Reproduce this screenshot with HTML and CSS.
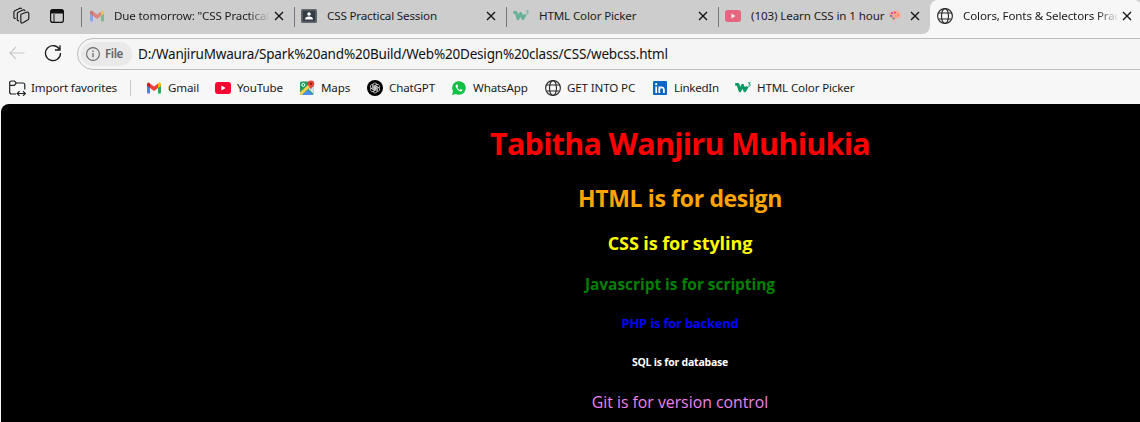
FILE: index.html
```html
<!DOCTYPE html>
<html lang="en">
<head>
<meta charset="utf-8">
<title>Colors, Fonts &amp; Selectors Practice</title>
<link rel="stylesheet" href="styles.css">
</head>
<body>
<svg class="defs" width="0" height="0">
  <symbol id="gmail" viewBox="0 0 16 16"><path fill="#4285f4" d="M1 4v8.500a1 1 0 0 0 1 1h2V7z"/><path fill="#34a853" d="M15 4v8.500a1 1 0 0 1-1 1h-2V7z"/><path fill="#c5221f" d="M1 4.200Q1 2.400 2.500 2.500L4 3.400V8L1 5.800z"/><path fill="#ea4335" d="M4 3.400l4 3 4-3V8l-4 3-4-3z"/><path fill="#fbbc04" d="M15 4.200q0-1.800-1.500-1.700L12 3.400V8l3-2.200z"/></symbol>
  <symbol id="youtube" viewBox="0 0 16 16"><rect y="2" width="16" height="12" rx="3" fill="#ff0033"/><path fill="#fff" d="M6.300 5.500l4.400 2.500-4.400 2.500z"/></symbol>
  <symbol id="w3" viewBox="0 0 16 16"><path fill="none" stroke="#059862" stroke-width="2.800" stroke-linejoin="round" d="M.2 4.300h2.800L5 10.800l2.500-5.600 2.300 5.600L12.200 6.500"/><path fill="none" stroke="#059862" stroke-width=".9" d="M13 2.800h2.300L14 4.200q1.500 0 1.300 1.200t-2.300.7"/></symbol>
  <symbol id="globe" viewBox="0 0 16 16"><g fill="none" stroke="#2b2b2b" stroke-width="1.150"><circle cx="8" cy="8" r="7.400"/><ellipse cx="8" cy="8" rx="3.500" ry="7.400"/><path d="M1.500 5h13M1.500 11h13"/></g></symbol>
  <symbol id="close" viewBox="0 0 10 10"><path d="M1 1l8 8M9 1L1 9" stroke="#161616" stroke-width="1.400"/></symbol>
</svg>

<div class="tabbar">
  <div class="inactive">
    <div class="tools">
      <svg class="workspaces" viewBox="0 0 18 18"><g fill="none" stroke="#1a1a1a" stroke-width="1.150" stroke-linejoin="round"><path d="M9.500 7l5-1.800q2-.5 2.300 1.300v4.700q0 1-.8 1.600L11 15.800q-1.800.8-2.200-.8V8.500q0-1.200.7-1.500"/><path d="M7 13.800q-1.700.2-1.700-1.300V6.800q0-1 1-1.500l4.500-2.200q1.700-.6 2.200 1"/><path d="M3.800 11.500q-1.900.3-1.900-1.300V5.200q0-1 1-1.500l4.500-2.300q1.500-.7 2.300.5"/></g></svg>
      <svg class="tabmenu" viewBox="0 0 14 14"><rect x=".6" y=".6" width="12.800" height="12.800" rx="2.200" fill="none" stroke="#111" stroke-width="1.200"/><path d="M.5 4.500V2.500a2 2 0 0 1 2-2h9a2 2 0 0 1 2 2v2z" fill="#111"/><path d="M4 5v8.500" stroke="#111"/></svg>
    </div>
    <div class="tab first"><svg class="ico dim"><use href="#gmail"/></svg><span class="title fade">Due tomorrow: "CSS Practical</span><svg class="x"><use href="#close"/></svg></div>
    <div class="tab"><svg class="ico" viewBox="0 0 16 16"><rect y="1" width="16" height="14" rx="1.500" fill="#62676a"/><rect x="1.700" y="2.700" width="12.600" height="10.600" fill="#333b45"/><circle cx="8" cy="6" r="1.800" fill="#fff"/><path d="M4 11.500q0-3 4-3t4 3z" fill="#fff"/></svg><span class="title">CSS Practical Session</span><svg class="x"><use href="#close"/></svg></div>
    <div class="tab"><svg class="ico dim"><use href="#w3"/></svg><span class="title">HTML Color Picker</span><svg class="x"><use href="#close"/></svg></div>
    <div class="tab"><svg class="ico dim"><use href="#youtube"/></svg><span class="title with-emoji">(103) Learn CSS in 1 hour<svg class="palette" viewBox="0 0 12 12"><path fill="#ffa58f" d="M1 3Q4 0 8 1t3.500 5-1 2.500-3 0-2 2.500T.5 7 1 3z"/><circle cx="3" cy="3" r="1.100" fill="#c43bc8"/><circle cx="6" cy="2.500" r="1" fill="#e7417c"/><circle cx="2.200" cy="6" r="1.100" fill="#327de4"/><circle cx="4.500" cy="8.500" r="1" fill="#23a8a0"/><circle cx="9" cy="5" r=".9" fill="#ef7c66"/></svg></span><svg class="x"><use href="#close"/></svg></div>
  </div>
  <div class="tab active"><svg class="ico"><use href="#globe"/></svg><span class="title fade">Colors, Fonts &amp; Selectors Practice</span><svg class="x"><use href="#close"/></svg></div>
</div>

<div class="toolbar">
  <svg class="back" viewBox="0 0 16 14"><path d="M15.500 7H1M7 1L1 7l6 6" fill="none" stroke="#c8c8c8" stroke-width="1.100"/></svg>
  <svg class="reload" viewBox="0 0 18 18"><path d="M15.800 6A7.500 7.500 0 1 0 16.500 9M16 1.200V6h-5" fill="none" stroke="#1b1b1b" stroke-width="1.300"/></svg>
  <div class="address">
    <span class="chip"><svg class="info" viewBox="0 0 14 14"><circle cx="7" cy="7" r="6.400" fill="none" stroke="#6a6a6a" stroke-width="1.100"/><path d="M7 6v4.300M7 3.600v1.300" stroke="#6a6a6a" stroke-width="1.300"/></svg><span class="file">File</span></span>
    <span class="url">D:/WanjiruMwaura/Spark%20and%20Build/Web%20Design%20class/CSS/webcss.html</span>
  </div>
</div>

<div class="bookmarks">
  <div class="bm import"><svg class="ico" viewBox="0 0 17 16"><path d="M7 14H2.500Q.7 14 .7 12.300V2.700Q.7 1 2.500 1h2.800l2 2h6.500q2 0 2 2v4.500M.7 5.300h4.600l2-2.300M8.500 13.500h7.500M10.500 11.200l-2.300 2.300 2.300 2.300M14 11.200l2.300 2.300-2.300 2.300" fill="none" stroke="#222" stroke-width="1.200"/></svg><span>Import favorites</span></div>
  <div class="rule"></div>
  <div class="bm gmail"><svg class="ico"><use href="#gmail"/></svg><span>Gmail</span></div>
  <div class="bm youtube"><svg class="ico"><use href="#youtube"/></svg><span>YouTube</span></div>
  <div class="bm maps"><svg class="ico" viewBox="0 0 16 16"><rect x="1" y="1.500" width="13.500" height="13.500" rx="1.500" fill="#1e9e5a"/><path d="M1 12.500L12 2l2 2L3 15H2q-1 0-1-1z" fill="#fbd04b"/><path d="M9.500 9l5 5V7l-2-1z" fill="#dce6ee"/><path d="M3 15l6-5.300 5 5.300z" fill="#4b8df8"/><circle cx="4.300" cy="4.900" r="1.500" fill="none" stroke="#fff"/><path d="M12 .5a3.300 3.300 0 0 1 3.300 3.300C15.300 6 12.600 7 12 10 11.400 7 8.700 6 8.700 3.800A3.300 3.300 0 0 1 12 .5z" fill="#e8453c"/><circle cx="12" cy="3.800" r="1.200" fill="#8e1f1a"/></svg><span>Maps</span></div>
  <div class="bm chatgpt"><svg class="ico" viewBox="0 0 16 16"><circle cx="8" cy="8" r="8" fill="#000"/><g fill="none" stroke="#ddd" stroke-width=".75"><path id="petal" d="M6 8V4.800Q6 3 8 3q1.500 0 2 1.300L7.200 6v3.500"/><use href="#petal" transform="rotate(60 8 8)"/><use href="#petal" transform="rotate(120 8 8)"/><use href="#petal" transform="rotate(180 8 8)"/><use href="#petal" transform="rotate(240 8 8)"/><use href="#petal" transform="rotate(300 8 8)"/></g></svg><span>ChatGPT</span></div>
  <div class="bm whatsapp"><svg class="ico" viewBox="0 0 16 16"><path d="M1 15l1-3.700A6.800 6.800 0 1 1 4.800 14z" fill="#12c143"/><path d="M5.500 4.500Q4 5.300 4.900 7.300q1.300 2.800 4 3.900 2 .7 2.700-1.200L9.800 8.900l-.9 1Q7.200 9.200 6.300 7.400l.8-.9-.7-2z" fill="#fff"/></svg><span>WhatsApp</span></div>
  <div class="bm getpc"><svg class="ico"><use href="#globe"/></svg><span>GET INTO PC</span></div>
  <div class="bm linkedin"><svg class="ico" viewBox="0 0 16 16"><rect x="1" y="1" width="14" height="14" rx="1" fill="#0a66c2"/><path d="M4.200 6.500V13M7.300 13V6.500M7.300 9.500Q7.500 7.300 9.600 7.300T11.900 9.500V13" fill="none" stroke="#fff" stroke-width="1.700"/><circle cx="4.200" cy="4.200" r="1.100" fill="#fff"/></svg><span>LinkedIn</span></div>
  <div class="bm picker"><svg class="ico"><use href="#w3"/></svg><span>HTML Color Picker</span></div>
</div>

<div class="viewport">
  <main class="page">
    <h1>Tabitha Wanjiru Muhiukia</h1>
    <h2>HTML is for design</h2>
    <h3>CSS is for styling</h3>
    <h4>Javascript is for scripting</h4>
    <h5>PHP is for backend</h5>
    <h6>SQL is for database</h6>
    <p>Git is for version control</p>
  </main>
</div>
</body>
</html>
```
FILE: styles.css
```css
* { box-sizing: border-box; }
body { margin: 0; width: 1140px; height: 422px; overflow: hidden; background: #f7f7f7; color: #1b1b1b; font: 11.6px/16px "Noto Sans", sans-serif; letter-spacing: -.15px; white-space: nowrap; }
svg { display: block; flex: none; }
.defs { position: absolute; }

.tabbar { display: flex; height: 34px; overflow: hidden; }
.inactive { display: flex; flex: none; width: 930px; background: #cdcdcd; border-bottom-right-radius: 8px; }
.tools { display: flex; align-items: center; gap: 20px; flex: none; width: 81px; padding: 0 0 2px 12px; }
.workspaces { width: 18px; height: 18px; }
.tabmenu { width: 14px; height: 14px; }
.tab { display: flex; align-items: center; flex: none; width: 212px; padding: 0 8px 2px 7px; background: linear-gradient(#777, #777) 0 7px / 1px 20px no-repeat; }
.tab.first { width: 213px; padding-left: 8px; }
.tab .title { width: 155px; margin-left: 10px; overflow: hidden; }
.tab.first .title { margin-left: 9px; }
.tab .with-emoji { display: flex; align-items: center; letter-spacing: -.1px; }
.x { width: 10px; height: 10px; margin-left: 4px; }
.tab.first .x { margin-left: 5px; }
.ico { width: 16px; height: 16px; }
.dim { opacity: .5; }
.fade { mask-image: linear-gradient(90deg, #000 134px, transparent 156px); }
.palette { width: 12px; height: 12px; margin-left: 5px; }
.tab.active { background: radial-gradient(circle at 8px 8px, #f7f7f7 7.5px, #cdcdcd 8.5px) 0 0 / 8px 8px no-repeat, radial-gradient(circle at 0 8px, #f7f7f7 7.5px, #cdcdcd 8.5px) 100% 0 / 8px 8px no-repeat; }

.toolbar { display: flex; align-items: center; height: 38px; padding-left: 9px; overflow: hidden; }
.back { width: 16px; height: 14px; }
.reload { width: 18px; height: 18px; margin-left: 19px; }
.address { display: flex; align-items: center; width: 1200px; flex: none; height: 32px; margin: 2px 0 0 15px; padding-left: 3px; border: 1px solid #bdbdbd; border-radius: 16px; background: #f5f5f5; }
.chip { display: flex; align-items: center; gap: 5px; width: 51px; height: 24px; padding-left: 5px; border-radius: 12px; background: #e9e9e9; color: #666; }
.info { width: 14px; height: 14px; }
.file { font-weight: 600; letter-spacing: -.4px; }
.url { margin-left: 6px; font-size: 13.5px; letter-spacing: -.19px; color: #111; }

.bookmarks { display: flex; align-items: center; gap: 17px; height: 32px; padding-left: 9px; }
.bm { display: flex; align-items: center; gap: 6px; flex: none; }
.import { width: 106px; }
.import .ico { width: 17px; margin-right: -1px; }
.rule { width: 1px; height: 16px; margin: 0 -2px; background: #c8c8c8; }
.gmail { width: 52px; }
.youtube { width: 67px; }
.maps { width: 51px; }
.chatgpt { width: 67px; }
.whatsapp { width: 77px; }
.getpc { width: 90px; }
.linkedin { width: 66px; letter-spacing: -.3px; }

.viewport { width: 1140px; height: 318px; padding-left: 1px; overflow: hidden; }
.page { display: flow-root; width: 1358px; height: 318px; border-radius: 8px 0 0 0; background: #000; font-family: "Open Sans", sans-serif; text-align: center; overflow: hidden; }
h1, h2, h3, h4, h5, h6 { font-weight: 700; }
h1 { margin: 20px 0 22px; color: red; font-size: 30.5px; line-height: 38px; letter-spacing: -.73px; }
h2 { margin: 0 0 20px; color: orange; font-size: 23px; line-height: 28px; letter-spacing: -.35px; }
h3 { margin: 0 0 21px; color: yellow; font-size: 18px; line-height: 22px; letter-spacing: -.08px; }
h4 { margin: 0 0 22px; color: green; font-size: 15.5px; line-height: 18px; letter-spacing: -.05px; }
h5 { margin: 0 0 24px; color: blue; font-size: 12.9px; line-height: 16px; letter-spacing: -.17px; }
h6 { margin: 0 0 24px; color: white; font-size: 10.5px; line-height: 14px; letter-spacing: -.22px; }
.page p { margin: 0; color: violet; font-size: 15.8px; line-height: 18px; letter-spacing: 0; }
```
